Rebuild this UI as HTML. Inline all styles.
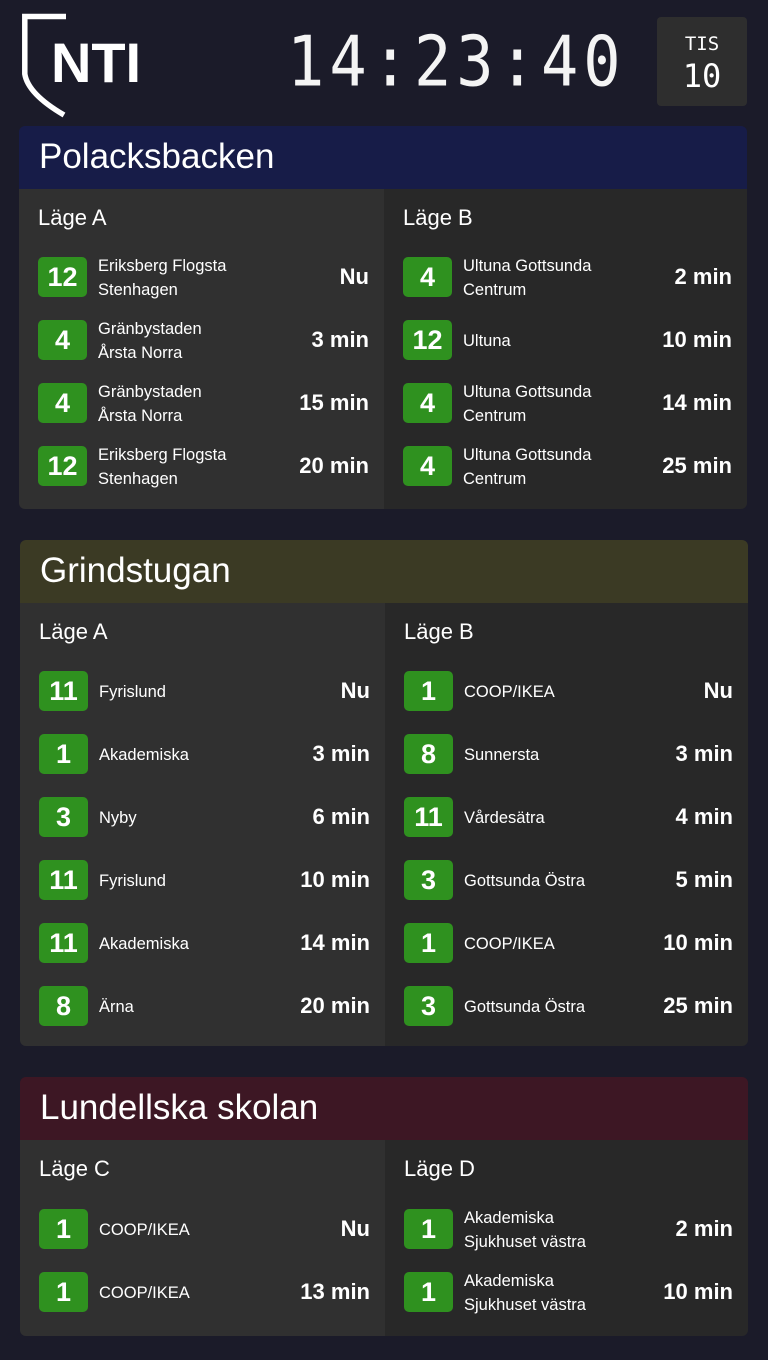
<!DOCTYPE html>
<html><head><meta charset="utf-8"><style>
*{margin:0;padding:0;box-sizing:border-box}
body{width:768px;height:1360px;background:#1b1b29;font-family:"Liberation Sans","DejaVu Sans",sans-serif;color:#fff;position:relative;overflow:hidden}
.abs{position:absolute}
.clock{left:287px;top:22px;font-family:"DejaVu Sans Mono","Liberation Mono",monospace;font-size:62px;letter-spacing:5px;line-height:80px;transform:scaleY(1.12);transform-origin:left center;color:#f4f4f4}
.date{left:657px;top:17px;width:90px;height:89px;background:#2e2e2e;border-radius:4px;font-family:"DejaVu Sans Mono","Liberation Mono",monospace;text-align:center}
.card{position:absolute;border-radius:6px;overflow:hidden}
.hdr{height:63px;font-size:35px;padding-left:20px;line-height:62px}
.cols{display:flex}
.col{position:relative;width:365px}
.col.l{background:#303030}.col.r{background:#282828;flex:1}
.lbl{position:absolute;left:19px;font-size:22px;line-height:26px}
.row{position:absolute;left:19px;right:15px;height:40px;display:flex;align-items:center}
.b{width:49px;height:40px;background:#2f911f;border-radius:5px;font-size:27px;font-weight:bold;display:flex;align-items:center;justify-content:center;flex:none}
.d{margin-left:11px;font-size:16.5px;line-height:24px;flex:1;padding-top:2px}
.t{font-size:22px;font-weight:bold}
</style></head><body>
<svg class="abs" style="left:0;top:0" width="160" height="125">
<path d="M66 16.5 H24.8 V74 Q28 94 64 115" fill="none" stroke="#fff" stroke-width="5.5"/>
<text x="51" y="82" font-family="Liberation Sans,sans-serif" font-weight="bold" font-size="56" fill="#fff" textLength="90" lengthAdjust="spacing">NTI</text>
</svg>
<div class="abs clock">14:23:40</div>
<div class="abs date"><div style="font-size:19px;margin-top:17px;line-height:20px">TIS</div><div style="font-size:32px;line-height:44px">10</div></div>

<div class="card" style="left:19px;top:126px;width:728px;height:383px">
<div class="hdr" style="background:#171c48">Polacksbacken</div>
<div class="cols" style="height:320px">
<div class="col l">
<div class="lbl" style="top:16px">Läge A</div>
<div class="row" style="top:68px"><div class="b">12</div><div class="d">Eriksberg Flogsta<br>Stenhagen</div><div class="t">Nu</div></div>
<div class="row" style="top:131px"><div class="b">4</div><div class="d">Gränbystaden<br>Årsta Norra</div><div class="t">3 min</div></div>
<div class="row" style="top:194px"><div class="b">4</div><div class="d">Gränbystaden<br>Årsta Norra</div><div class="t">15 min</div></div>
<div class="row" style="top:257px"><div class="b">12</div><div class="d">Eriksberg Flogsta<br>Stenhagen</div><div class="t">20 min</div></div>
</div>
<div class="col r">
<div class="lbl" style="top:16px">Läge B</div>
<div class="row" style="top:68px"><div class="b">4</div><div class="d">Ultuna Gottsunda<br>Centrum</div><div class="t">2 min</div></div>
<div class="row" style="top:131px"><div class="b">12</div><div class="d">Ultuna</div><div class="t">10 min</div></div>
<div class="row" style="top:194px"><div class="b">4</div><div class="d">Ultuna Gottsunda<br>Centrum</div><div class="t">14 min</div></div>
<div class="row" style="top:257px"><div class="b">4</div><div class="d">Ultuna Gottsunda<br>Centrum</div><div class="t">25 min</div></div>
</div></div></div>

<div class="card" style="left:20px;top:540px;width:728px;height:506px">
<div class="hdr" style="background:#3b3a24">Grindstugan</div>
<div class="cols" style="height:443px">
<div class="col l">
<div class="lbl" style="top:16px">Läge A</div>
<div class="row" style="top:68px"><div class="b">11</div><div class="d">Fyrislund</div><div class="t">Nu</div></div>
<div class="row" style="top:131px"><div class="b">1</div><div class="d">Akademiska</div><div class="t">3 min</div></div>
<div class="row" style="top:194px"><div class="b">3</div><div class="d">Nyby</div><div class="t">6 min</div></div>
<div class="row" style="top:257px"><div class="b">11</div><div class="d">Fyrislund</div><div class="t">10 min</div></div>
<div class="row" style="top:320px"><div class="b">11</div><div class="d">Akademiska</div><div class="t">14 min</div></div>
<div class="row" style="top:383px"><div class="b">8</div><div class="d">Ärna</div><div class="t">20 min</div></div>
</div>
<div class="col r">
<div class="lbl" style="top:16px">Läge B</div>
<div class="row" style="top:68px"><div class="b">1</div><div class="d">COOP/IKEA</div><div class="t">Nu</div></div>
<div class="row" style="top:131px"><div class="b">8</div><div class="d">Sunnersta</div><div class="t">3 min</div></div>
<div class="row" style="top:194px"><div class="b">11</div><div class="d">Vårdesätra</div><div class="t">4 min</div></div>
<div class="row" style="top:257px"><div class="b">3</div><div class="d">Gottsunda Östra</div><div class="t">5 min</div></div>
<div class="row" style="top:320px"><div class="b">1</div><div class="d">COOP/IKEA</div><div class="t">10 min</div></div>
<div class="row" style="top:383px"><div class="b">3</div><div class="d">Gottsunda Östra</div><div class="t">25 min</div></div>
</div></div></div>

<div class="card" style="left:20px;top:1077px;width:728px;height:259px">
<div class="hdr" style="background:#3d1724">Lundellska skolan</div>
<div class="cols" style="height:196px">
<div class="col l">
<div class="lbl" style="top:16px">Läge C</div>
<div class="row" style="top:69px"><div class="b">1</div><div class="d">COOP/IKEA</div><div class="t">Nu</div></div>
<div class="row" style="top:132px"><div class="b">1</div><div class="d">COOP/IKEA</div><div class="t">13 min</div></div>
</div>
<div class="col r">
<div class="lbl" style="top:16px">Läge D</div>
<div class="row" style="top:69px"><div class="b">1</div><div class="d">Akademiska<br>Sjukhuset västra</div><div class="t">2 min</div></div>
<div class="row" style="top:132px"><div class="b">1</div><div class="d">Akademiska<br>Sjukhuset västra</div><div class="t">10 min</div></div>
</div></div></div>
</body></html>
